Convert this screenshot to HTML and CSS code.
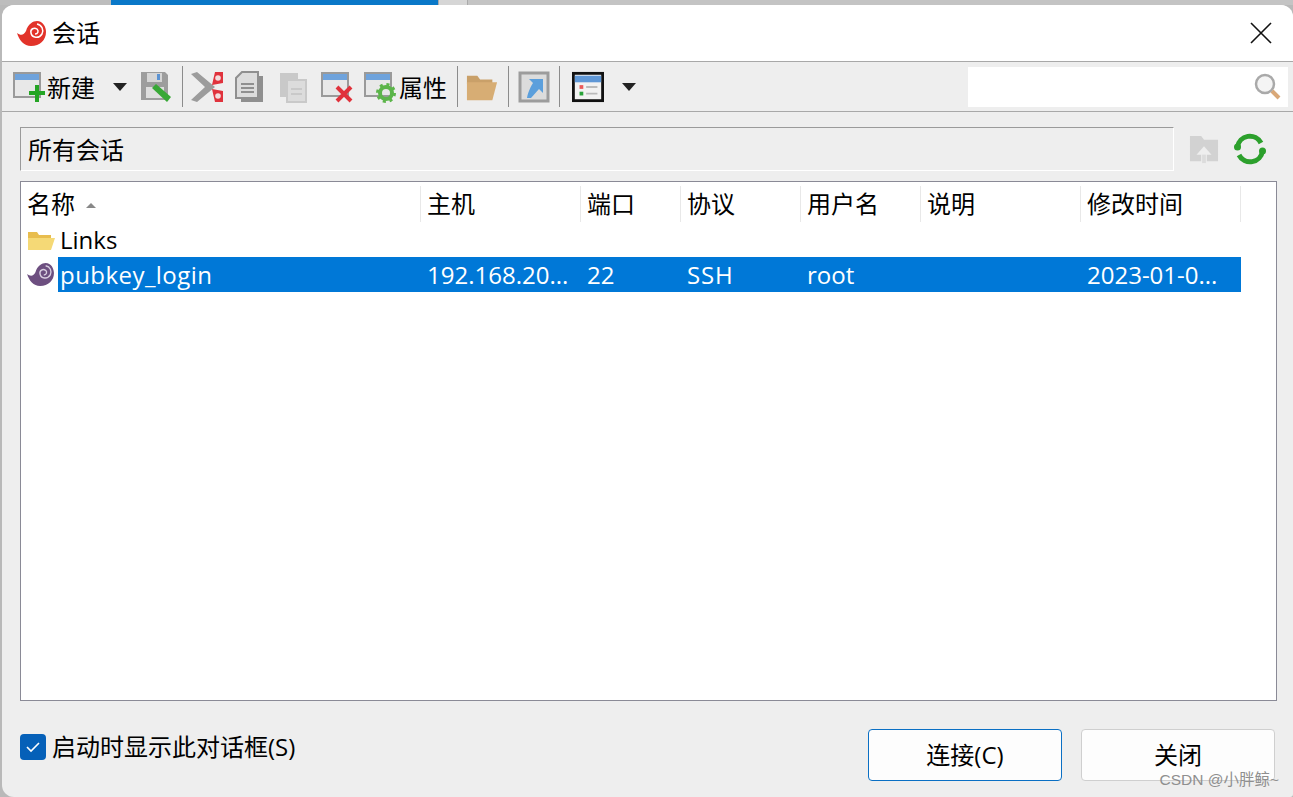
FILE: index.html
```html
<!DOCTYPE html>
<html lang="zh-CN">
<head>
<meta charset="UTF-8">
<link rel="stylesheet" href="styles.css">
</head>
<body>

<div class="taskstrip">
    <div class="strip-a"></div>
    <div class="strip-blue"></div>
    <div class="strip-b"></div>
    <div class="strip-c"></div>
</div>

<div class="window">
    <div class="titlebar">
        <svg class="app-logo" width="30" height="27" viewBox="0 0 30 27">
            <path d="M0 13 C4 16 7 15 9 11 C11 4 16 1 20 1 C26 1 29 7 29 12 C29 20 23 26 14 26 C7 26 2 20 0 13Z" fill="#e2332a"/>
            <path d="M20 4 C25 5 27 10 25 14 C22 19 15 18 14 13 C13 9 17 7 20 9 C22 11 21 14 18 14" fill="none" stroke="#fff" stroke-width="1.500"/>
        </svg>
        <span class="title-text">会话</span>
        <svg class="close-x" width="22" height="22" viewBox="0 0 22 22"><path d="M1 1 L21 21 M21 1 L1 21" stroke="#111" stroke-width="1.600"/></svg>
    </div>

    <div class="toolbar">
        <svg class="tool first" width="32" height="34" viewBox="0 0 32 34">
            <rect x="1" y="3" width="26" height="24" fill="#e8e8e8" stroke="#9a9a9a" stroke-width="2"/><rect x="2" y="4" width="24" height="6" fill="#6fa3dc"/>
            <path d="M22 15 h4 v6 h6 v4 h-6 v7 h-4 v-7 h-6 v-4 h6z" fill="#25a525"/>
        </svg>
        <span class="tool-label">新建</span>
        <span class="caret"></span>
        <svg class="tool save" width="32" height="32" viewBox="0 0 32 32">
            <path d="M1 1 H25 L28 4 V29 H1Z" fill="#9d9d9d"/><rect x="7" y="2" width="15" height="9" fill="#d6d6d6"/><rect x="17" y="3" width="3" height="6" fill="#5b93d3"/><rect x="6" y="16" width="18" height="11" fill="#dedede"/>
            <path d="M12 17 L16 13 L31 26 L27 31Z" fill="#38a836"/>
        </svg>
        <span class="sep"></span>
        <svg class="tool cut" width="34" height="34" viewBox="0 0 34 34">
            <path d="M0 4 L6 2 L24 17 L6 32 L0 30 L14 17Z" fill="#9c9c9c"/>
            <path d="M21 15 L24 2 H32 V13Z M21 19 L24 32 H32 V21Z" fill="#e0323c"/>
            <circle cx="27" cy="8" r="2.800" fill="#f3dcdc"/><circle cx="27" cy="26" r="2.800" fill="#f3dcdc"/>
        </svg>
        <svg class="tool copy" width="28" height="32" viewBox="0 0 28 32">
            <rect x="6" y="5" width="22" height="26" fill="#8f8f8f"/><path d="M7 1 H23 V27 H1 V7Z" fill="#dcdcdc" stroke="#8f8f8f" stroke-width="2"/><path d="M6 13 H19 M6 17 H19 M6 21 H19" stroke="#8f8f8f" stroke-width="2"/>
        </svg>
        <svg class="tool paste" width="28" height="32" viewBox="0 0 28 32">
            <rect x="1" y="2" width="18" height="24" fill="#c9c9c9"/><rect x="8" y="9" width="19" height="22" fill="#dcdcdc" stroke="#c9c9c9" stroke-width="2"/><path d="M12 18 H23 M12 23 H23" stroke="#c9c9c9" stroke-width="2"/>
        </svg>
        <svg class="tool del" width="32" height="32" viewBox="0 0 32 32">
            <rect x="1" y="2" width="26" height="23" fill="#e8e8e8" stroke="#9a9a9a" stroke-width="2"/><rect x="2" y="3" width="24" height="6" fill="#6fa3dc"/>
            <path d="M16 16 L30 30 M30 16 L16 30" stroke="#e0323c" stroke-width="4"/>
        </svg>
        <svg class="tool prop" width="32" height="32" viewBox="0 0 32 32">
            <rect x="1" y="2" width="26" height="23" fill="#e8e8e8" stroke="#9a9a9a" stroke-width="2"/><rect x="2" y="3" width="24" height="6" fill="#6fa3dc"/>
            <circle cx="22" cy="22" r="6" fill="none" stroke="#5cb54a" stroke-width="4"/><circle cx="22" cy="22" r="8.500" fill="none" stroke="#5cb54a" stroke-width="3" stroke-dasharray="3 3.700"/>
        </svg>
        <span class="tool-label prop-label">属性</span>
        <span class="sep"></span>
        <svg class="tool folder" width="32" height="30" viewBox="0 0 34 30">
            <path d="M1 3 H12 L15 7 H28 V12 H1Z" fill="#c9a069"/><path d="M1 29 V10 H33 L28 29Z" fill="#d7ad74"/>
        </svg>
        <span class="sep"></span>
        <svg class="tool link" width="32" height="32" viewBox="0 0 32 32">
            <rect x="2" y="2" width="28" height="28" fill="#dcdcdc" stroke="#9c9c9c" stroke-width="3"/>
            <path d="M11 8 H25 V22 L21 18 L13 27 H9 C10 21 13 15 15 12Z" fill="#5b9fdc"/>
        </svg>
        <span class="sep"></span>
        <svg class="tool view" width="32" height="32" viewBox="0 0 34 32">
            <rect x="1.500" y="1.500" width="31" height="29" fill="#f2f2f2" stroke="#111" stroke-width="3"/><rect x="3" y="4" width="28" height="7" fill="#5f97d6"/>
            <rect x="8" y="14" width="4" height="4" fill="#ea5a5a"/><rect x="8" y="21" width="4" height="4" fill="#2aa33a"/><path d="M15 16 H27 M15 23 H27" stroke="#bbb" stroke-width="2"/>
        </svg>
        <span class="caret view-caret"></span>
        <div class="search">
            <svg width="28" height="28" viewBox="0 0 28 28">
                <circle cx="11" cy="11" r="9" fill="#f4f4f4" stroke="#a9a9a9" stroke-width="2.500"/><path d="M18 18 L25 25" stroke="#d9a878" stroke-width="4"/>
            </svg>
        </div>
    </div>

    <div class="content">
        <div class="path-row">
            <div class="path-box">所有会话</div>
            <svg class="upload" width="30" height="30" viewBox="0 0 32 32">
                <path d="M1 2 H13 L16 6 H31 V29 H19 V22 H24 L16 13 L8 22 H13 V29 H1Z" fill="#d2d2d2"/><rect x="14" y="22" width="4" height="9" fill="#dcdcdc"/>
            </svg>
            <svg class="refresh" width="32" height="32" viewBox="0 0 32 32">
                <path d="M3.500 14 A12.500 12.500 0 0 1 27 10" fill="none" stroke="#2ca02c" stroke-width="5"/><path d="M28.500 18 A12.500 12.500 0 0 1 5 22" fill="none" stroke="#2ca02c" stroke-width="5"/>
                <circle cx="3.500" cy="14" r="3.500" fill="#2ca02c"/><circle cx="28.500" cy="18" r="3.500" fill="#2ca02c"/>
            </svg>
        </div>

        <div class="table">
            <div class="row head">
                <div class="cell c-name">名称<span class="sort"></span></div>
                <div class="cell c-host">主机</div>
                <div class="cell c-port">端口</div>
                <div class="cell c-proto">协议</div>
                <div class="cell c-user">用户名</div>
                <div class="cell c-desc">说明</div>
                <div class="cell c-time">修改时间</div>
            </div>
            <div class="row item">
                <svg class="row-icon" width="28" height="22" viewBox="0 0 28 22">
                    <path d="M1 3 H10 L12 6 H24 V10 H1Z" fill="#e8bd4e"/><path d="M1 21 V9 H28 L24 21Z" fill="#f5d976"/>
                </svg>
                <span class="name-text">Links</span>
            </div>
            <div class="row item selected">
                <svg class="row-icon" width="28" height="25" viewBox="0 0 30 27">
                    <path d="M0 13 C4 16 7 15 9 11 C11 4 16 1 20 1 C26 1 29 7 29 12 C29 20 23 26 14 26 C7 26 2 20 0 13Z" fill="#6d4f80"/>
                    <path d="M20 4 C25 5 27 10 25 14 C22 19 15 18 14 13 C13 9 17 7 20 9 C22 11 21 14 18 14" fill="none" stroke="#d9cfe0" stroke-width="1.500"/>
                </svg>
                <div class="sel-band">
                    <div class="cell c-name-sel">pubkey_login</div>
                    <div class="cell c-host">192.168.20...</div>
                    <div class="cell c-port">22</div>
                    <div class="cell c-proto proto-val">SSH</div>
                    <div class="cell c-user">root</div>
                    <div class="cell c-desc"></div>
                    <div class="cell c-time">2023-01-0...</div>
                </div>
            </div>
        </div>

        <div class="footer">
            <label class="startup">
                <span class="checkbox">
                    <svg width="16" height="12" viewBox="0 0 16 12"><path d="M2 6 L6 10 L14 2" fill="none" stroke="#fff" stroke-width="1.600"/></svg>
                </span>
                启动时显示此对话框(S)
            </label>
            <button class="btn primary">连接(C)</button>
            <button class="btn">关闭</button>
        </div>
    </div>
</div>

<div class="watermark">CSDN @小胖鲸~</div>

</body>
</html>
```
FILE: styles.css
```css
* { margin: 0; padding: 0; box-sizing: border-box; }

body {
    width: 1293px;
    height: 797px;
    overflow: hidden;
    background: #b9b9b9;
    font-family: "Open Sans", "Noto Sans CJK SC", sans-serif;
    font-size: 24px;
    color: #000;
    position: relative;
}

.taskstrip {
    display: flex;
    height: 5px;
}
.strip-a { width: 111px; background: #bdbdbd; }
.strip-blue { width: 327px; background: #0a78c8; }
.strip-b { width: 30px; background: #d6d6d6; border-left: 1px solid #aaa; border-right: 1px solid #aaa; }
.strip-c { flex: 1; background: #c4c4c4; }

.window {
    margin-left: 2px;
    height: 792px;
    background: #eeeeee;
    border-radius: 12px 12px 3px 12px;
    overflow: hidden;
}

.titlebar {
    display: flex;
    align-items: center;
    height: 57px;
    padding-left: 15px;
    background: #fff;
    border-bottom: 1px solid #a8a8a8;
}
.app-logo { margin-right: 5px; }
.title-text { line-height: 1; }
.close-x { margin-left: auto; margin-right: 21px; }

.toolbar {
    display: flex;
    align-items: center;
    height: 50px;
    border-bottom: 1px solid #a8a8a8;
}
.tool { flex: none; }
.tool.first { margin-left: 11px; }
.tool-label { margin-left: 2px; margin-top: 2px; line-height: 1; }
.caret {
    width: 0;
    height: 0;
    margin-left: 18px;
    border-left: 7px solid transparent;
    border-right: 7px solid transparent;
    border-top: 8px solid #222;
}
.save { margin-left: 13px; }
.sep { width: 1px; height: 41px; background: #8c8c8c; flex: none; }
.save + .sep { margin-left: 10px; }
.cut { margin-left: 8px; }
.copy { margin-left: 10px; }
.paste { margin-left: 16px; }
.del { margin-left: 14px; }
.prop { margin-left: 11px; }
.prop-label { margin-left: 3px; margin-right: 10px; }
.folder { margin-left: 8px; margin-right: 10px; }
.link { margin-left: 9px; margin-right: 9px; }
.view { margin-left: 12px; }
.view-caret { margin-left: 18px; }

.search {
    margin-left: auto;
    margin-right: 5px;
    width: 320px;
    height: 40px;
    background: #fff;
    display: flex;
    align-items: center;
    justify-content: flex-end;
    padding-right: 6px;
}

.content { padding: 15px 16px 0 18px; }

.path-row {
    display: flex;
    align-items: center;
    height: 44px;
}
.path-box {
    width: 1154px;
    height: 44px;
    line-height: 43px;
    padding-left: 7px;
    border-top: 1px solid #9a9a9a;
    border-left: 1px solid #9a9a9a;
    border-right: 1px solid #fff;
    border-bottom: 1px solid #fff;
}
.upload { margin-left: 15px; }
.refresh { margin-left: 15px; }

.table {
    width: 1257px;
    height: 520px;
    margin-top: 10px;
    background: #fff;
    border: 1px solid #8a8a96;
}

.row { display: flex; align-items: center; }
.head { height: 40px; padding-top: 3px; }
.head .cell { height: 36px; border-right: 1px solid #e8e8e8; }
.cell {
    flex: none;
    padding-left: 6px;
    line-height: 36px;
    white-space: nowrap;
}
.c-name { width: 400px; }
.c-host { width: 160px; }
.c-port { width: 100px; }
.c-proto { width: 120px; }
.c-user { width: 120px; }
.c-desc { width: 160px; }
.c-time { width: 160px; }
.sort {
    display: inline-block;
    width: 0;
    height: 0;
    margin-left: 11px;
    vertical-align: 5px;
    border-left: 5px solid transparent;
    border-right: 5px solid transparent;
    border-bottom: 5px solid #888;
}

.item { height: 35px; }
.row-icon { flex: none; margin-left: 6px; }
.name-text { margin-left: 5px; }
.sel-band {
    display: flex;
    height: 35px;
    margin-left: 3px;
    background: #0078d7;
    color: #fff;
}
.sel-band .cell { line-height: 35px; }
.c-name-sel { width: 363px; padding-left: 2px; letter-spacing: 0.45px; }
.proto-val { letter-spacing: 0.8px; }

.footer {
    display: flex;
    align-items: flex-start;
    margin-top: 28px;
}
.startup {
    display: flex;
    align-items: center;
    flex: 1;
    height: 26px;
    margin-top: 5px;
    line-height: 26px;
}
.checkbox {
    display: flex;
    align-items: center;
    justify-content: center;
    width: 26px;
    height: 26px;
    margin-right: 6px;
    border-radius: 4px;
    background: #0560b8;
}
.btn {
    width: 194px;
    height: 52px;
    margin-left: 19px;
    padding-bottom: 3px;
    font: inherit;
    color: #000;
    background: #fdfdfd;
    border: 1px solid #cfcfcf;
    border-radius: 4px;
}
.btn.primary { margin-left: 0; border-color: #0a6fc4; }
.footer .btn:last-child { margin-right: 2px; }

.watermark {
    position: absolute;
    right: 14px;
    bottom: 8px;
    font-family: "Liberation Sans", "Noto Sans CJK SC", sans-serif;
    font-size: 15.500px;
    color: #8f8f8f;
}
```
